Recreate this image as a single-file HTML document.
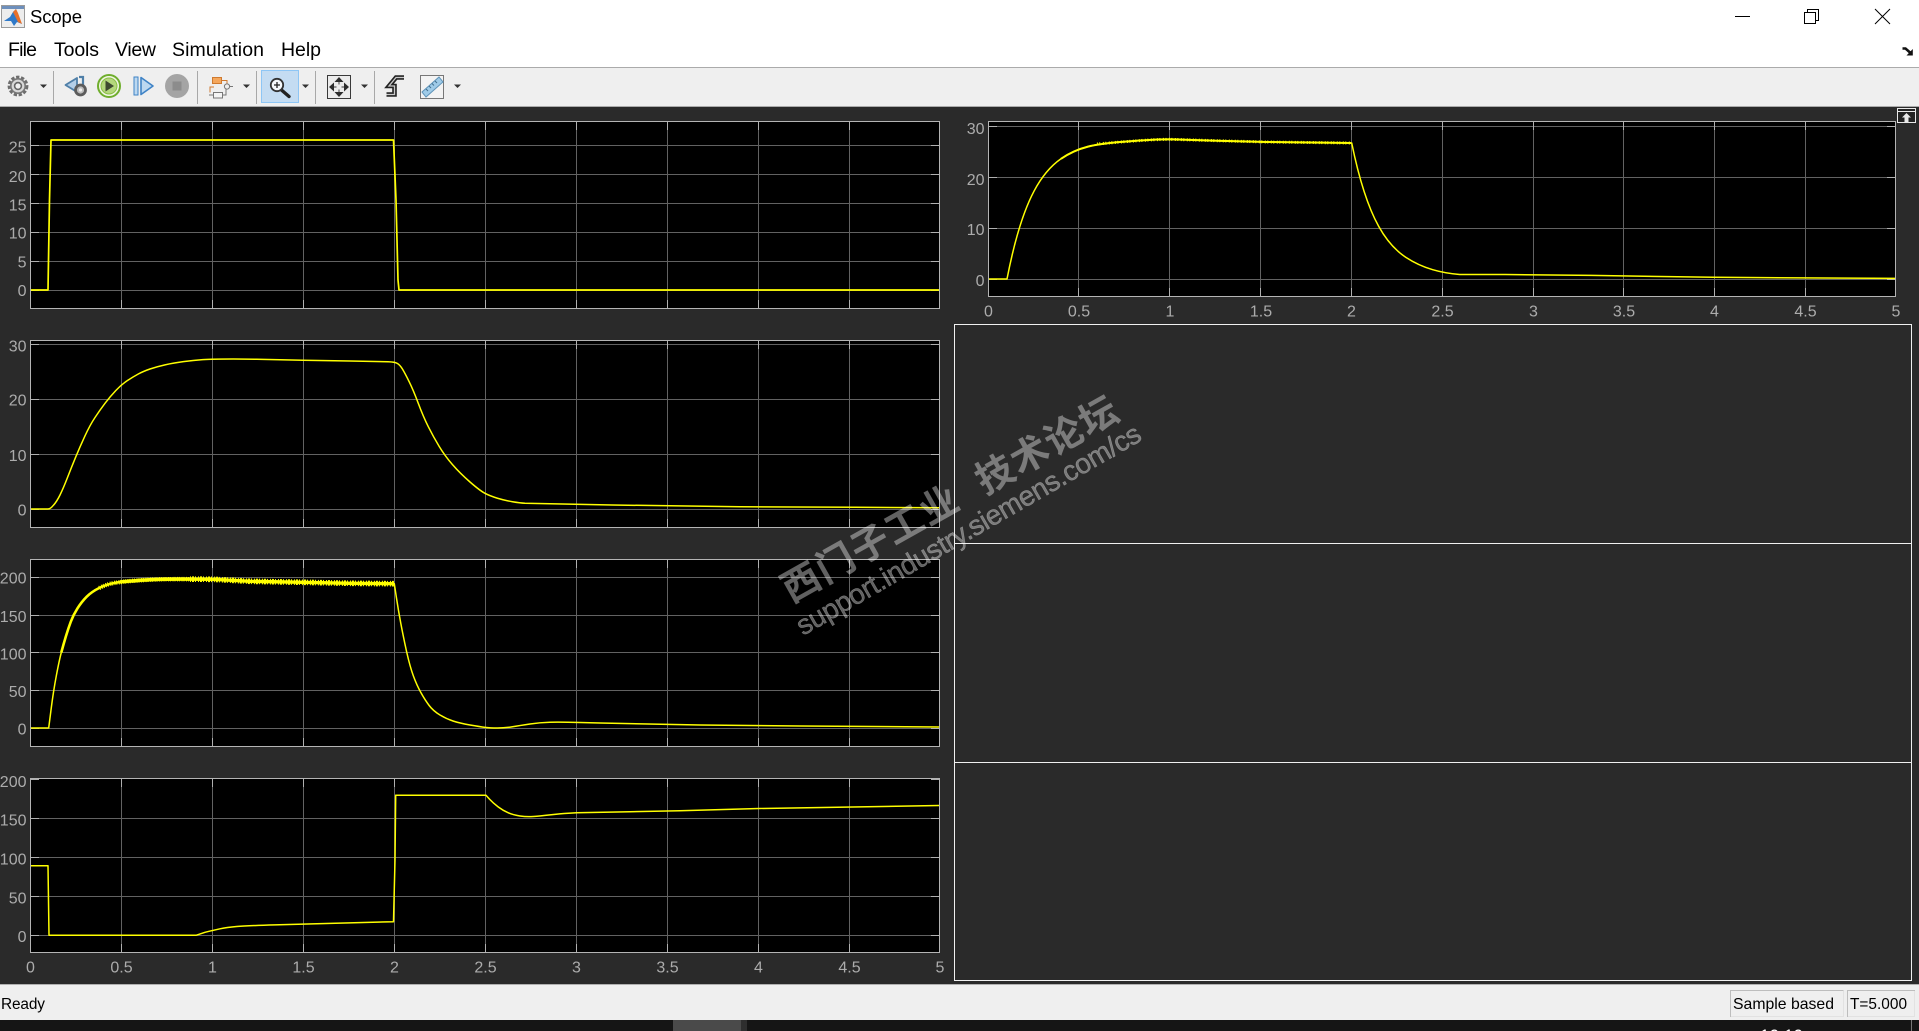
<!DOCTYPE html>
<html lang="en">
<head>
<meta charset="utf-8">
<title>Scope</title>
<style>
html,body{margin:0;padding:0;width:1919px;height:1031px;overflow:hidden;background:#2a2a2a}
svg{display:block;font-family:"Liberation Sans","Noto Sans CJK SC",sans-serif}
.t{fill:#acacac;font-size:16px}
.e{text-anchor:end}
.m{text-anchor:middle}
.ui{fill:#000;font-size:19.5px}
.st{fill:#000;font-size:15.4px}
.grid{stroke:#626262;stroke-width:1;fill:none;shape-rendering:crispEdges}
.tick{stroke:#b0b0b0;stroke-width:1;fill:none;shape-rendering:crispEdges}
.frame{stroke:#b4b4b4;stroke-width:1;fill:#000;shape-rendering:crispEdges}
.c{fill:none;stroke:#ffff00;stroke-width:1.5;stroke-linejoin:round}
.wm{fill:rgba(255,255,255,.38)}
</style>
</head>
<body>
<svg width="1919" height="1031" viewBox="0 0 1919 1031" xmlns="http://www.w3.org/2000/svg">
<!-- chrome backgrounds -->
<rect width="1919" height="67" fill="#fff"/>
<rect y="67" width="1919" height="1" fill="#ababab"/>
<rect y="68" width="1919" height="38" fill="#efefef"/>
<rect y="106" width="1919" height="1.4" fill="#ababab"/>
<rect y="107" width="1919" height="877" fill="#2a2a2a"/>

<!-- title logo -->
<rect x="1.5" y="5.5" width="23" height="22" fill="#ededed" stroke="#9a9a9a"/>
<rect x="2" y="6" width="22" height="3" fill="#6d8fbc"/>
<polygon points="4,21 10,17 13,12 16,9 20,21 22,24 17,22 14,26 11,21" fill="#2f79c8"/>
<polygon points="13,12 16,9 18,13 22,24 18,22 15,16" fill="#e8702a"/>

<text x="30" y="23" class="ui" style="font-size:18.5px" textLength="52">Scope</text>
<text x="8" y="56" class="ui" textLength="29">File</text>
<text x="54" y="56" class="ui" textLength="45">Tools</text>
<text x="115" y="56" class="ui" textLength="41">View</text>
<text x="172" y="56" class="ui" textLength="92">Simulation</text>
<text x="281" y="56" class="ui" textLength="40">Help</text>

<!-- window controls -->
<path d="M1735 16.5H1750" stroke="#000" stroke-width="1" fill="none" shape-rendering="crispEdges"/>
<rect x="1804.5" y="12.5" width="11" height="11" fill="#fff" stroke="#000" shape-rendering="crispEdges"/>
<path d="M1807.5 12.5V9.5H1818.5V20.5H1815.5" stroke="#000" fill="none" shape-rendering="crispEdges"/>
<path d="M1875 9L1890 24M1890 9L1875 24" stroke="#000" stroke-width="1" fill="none"/>
<path d="M1902.500 48.500H1905.500L1910 52.500" stroke="#111" stroke-width="2.600" fill="none"/>
<path d="M1912.800 49V55.500H1906.500Z" fill="#111"/>

<!-- toolbar separators -->
<path d="M53.5 71V104M197.5 71V104M256.5 71V104M315.5 71V104M374.5 71V104" stroke="#a8a8a8" fill="none" shape-rendering="crispEdges"/>
<!-- gear -->
<circle cx="18" cy="86" r="8.6" fill="none" stroke="#6e6e6e" stroke-width="3.6" stroke-dasharray="3.2 1.6"/>
<circle cx="18" cy="86" r="7.2" fill="#d8d8d8" stroke="#777" stroke-width="1.6"/>
<circle cx="18" cy="86" r="3.4" fill="#efefef" stroke="#666" stroke-width="1.6"/>
<!-- dropdown arrows -->
<path d="M40 84.5h7l-3.5 3.5zM243 84.5h7l-3.5 3.5zM302 84.5h7l-3.5 3.5zM361 84.5h7l-3.5 3.5zM454 84.5h7l-3.5 3.5z" fill="#333"/>
<!-- step back -->
<path d="M65.5 85L77 78V92Z" fill="#b4cfe8" stroke="#4f7fa8" stroke-width="1.8" stroke-linejoin="round"/>
<path d="M79 77H83V85" fill="none" stroke="#4f7fa8" stroke-width="2.200"/>
<circle cx="80.5" cy="90" r="5" fill="#bdbdbd" stroke="#5c5c5c" stroke-width="2.800"/>
<circle cx="80.5" cy="90" r="1.6" fill="#efefef"/>
<!-- play -->
<circle cx="109" cy="86" r="11" fill="#f2f6e6" stroke="#6fae2d" stroke-width="2"/>
<circle cx="109" cy="86" r="8" fill="#b4d87c" stroke="#8abf46" stroke-width="1"/>
<path d="M105.5 80.5L105.5 91.5L114 86Z" fill="#3e4a30"/>
<!-- step forward -->
<rect x="134" y="77" width="4" height="18" fill="#bcd8f0" stroke="#3f83c6" stroke-width="1"/>
<path d="M141 77.5L153 86L141 94.5Z" fill="#bcd8f0" stroke="#3f83c6" stroke-width="1.6" stroke-linejoin="round"/>
<!-- stop -->
<circle cx="177" cy="86" r="12" fill="#a4a4a4"/>
<rect x="172.5" y="81.5" width="9" height="9" fill="#8c8c8c"/>
<!-- signal selector -->
<rect x="212.5" y="77.5" width="9" height="6" fill="#f5a75c" stroke="#cf7a30"/>
<path d="M221.5 80.5H227V85M210 92.5V87H214" fill="none" stroke="#cf7a30"/>
<rect x="213.5" y="92.5" width="9" height="5.5" fill="#f4f4f4" stroke="#777"/>
<path d="M222.5 95H226V88.5M209 95H213.500" fill="none" stroke="#777"/>
<circle cx="227" cy="86.500" r="2.600" fill="#efefef" stroke="#777"/>
<path d="M229.600 86.500H233" stroke="#777" fill="none"/>
<!-- zoom button -->
<rect x="261.5" y="70.5" width="37" height="32" fill="#c4dcf2" stroke="#8ec6f5"/>
<path d="M281.500 90L289 96.500" stroke="#222" stroke-width="3.400" stroke-linecap="round" fill="none"/>
<circle cx="277" cy="85" r="6.200" fill="#f5f8fb" stroke="#333" stroke-width="1.800"/>
<path d="M274 85H280M277 82V88" stroke="#222" stroke-width="1.300" fill="none"/>
<!-- autoscale -->
<rect x="327.500" y="75.500" width="23" height="23" fill="#ececec" stroke="#3a3a3a" stroke-width="1.400" shape-rendering="crispEdges"/>
<path d="M339 77l4.500 5h-9zM339 97l4.500-5h-9zM329 87l5-4.500v9zM349 87l-5-4.500v9z" fill="#2c2c2c"/>
<path d="M339 82V84.500M339 89.500V92M334 87H336.500M341.500 87H344" stroke="#777" stroke-width="1.400" fill="none"/>
<!-- trigger -->
<path d="M386.500 94.500H394.500V86H389L396 77.500H404" fill="none" stroke="#232323" stroke-width="4.600"/>
<path d="M386.500 94.500H394.500V86H389L396 77.500H404" fill="none" stroke="#c9c9c9" stroke-width="1.300"/>
<!-- ruler -->
<rect x="420.500" y="75.500" width="23" height="23" fill="#f3f3f3" stroke="#777" shape-rendering="crispEdges"/>
<path d="M422 92L439 77L443 82L426 97Z" fill="#9fcbe8" stroke="#5e93b8"/>
<path d="M428 91l-2-2M431 88l-2-2M434 85.500l-2-2M437 83l-2-2" stroke="#44708f" fill="none"/>

<!-- Plot frames -->
<rect class="frame" x="30.500" y="121.500" width="909" height="187"/>
<rect class="frame" x="30.500" y="340.500" width="909" height="187"/>
<rect class="frame" x="30.500" y="559.500" width="909" height="187"/>
<rect class="frame" x="30.500" y="778.500" width="909" height="174"/>
<rect class="frame" x="988.500" y="121.500" width="907" height="175"/>

<!-- Plot 1 grid -->
<path class="grid" d="M121.500 122V308M212.500 122V308M303.500 122V308M394.500 122V308M485.500 122V308M576.500 122V308M667.500 122V308M758.500 122V308M849.500 122V308M31 145.500H939M31 174.500H939M31 203.500H939M31 232.500H939M31 261.500H939M31 290.500H939"/>
<path class="tick" d="M121.500 122v8M212.500 122v8M303.500 122v8M394.500 122v8M485.500 122v8M576.500 122v8M667.500 122v8M758.500 122v8M849.500 122v8M121.500 300v8M212.500 300v8M303.500 300v8M394.500 300v8M485.500 300v8M576.500 300v8M667.500 300v8M758.500 300v8M849.500 300v8M31 145.500h8M31 174.500h8M31 203.500h8M31 232.500h8M31 261.500h8M31 290.500h8M931 145.500h8M931 174.500h8M931 203.500h8M931 232.500h8M931 261.500h8M931 290.500h8"/>
<!-- Plot 2 grid -->
<path class="grid" d="M121.500 341V527M212.500 341V527M303.500 341V527M394.500 341V527M485.500 341V527M576.500 341V527M667.500 341V527M758.500 341V527M849.500 341V527M31 344.500H939M31 399.500H939M31 454.500H939M31 509.500H939"/>
<path class="tick" d="M121.500 341v8M212.500 341v8M303.500 341v8M394.500 341v8M485.500 341v8M576.500 341v8M667.500 341v8M758.500 341v8M849.500 341v8M121.500 519v8M212.500 519v8M303.500 519v8M394.500 519v8M485.500 519v8M576.500 519v8M667.500 519v8M758.500 519v8M849.500 519v8M31 344.500h8M31 399.500h8M31 454.500h8M31 509.500h8M931 344.500h8M931 399.500h8M931 454.500h8M931 509.500h8"/>
<!-- Plot 3 grid -->
<path class="grid" d="M121.500 560V746M212.500 560V746M303.500 560V746M394.500 560V746M485.500 560V746M576.500 560V746M667.500 560V746M758.500 560V746M849.500 560V746M31 577.500H939M31 615.500H939M31 652.500H939M31 690.500H939M31 728.500H939"/>
<path class="tick" d="M121.500 560v8M212.500 560v8M303.500 560v8M394.500 560v8M485.500 560v8M576.500 560v8M667.500 560v8M758.500 560v8M849.500 560v8M121.500 738v8M212.500 738v8M303.500 738v8M394.500 738v8M485.500 738v8M576.500 738v8M667.500 738v8M758.500 738v8M849.500 738v8M31 577.500h8M31 615.500h8M31 652.500h8M31 690.500h8M31 728.500h8M931 577.500h8M931 615.500h8M931 652.500h8M931 690.500h8M931 728.500h8"/>
<!-- Plot 4 grid -->
<path class="grid" d="M121.500 779V952M212.500 779V952M303.500 779V952M394.500 779V952M485.500 779V952M576.500 779V952M667.500 779V952M758.500 779V952M849.500 779V952M31 818.500H939M31 857.500H939M31 896.500H939M31 935.500H939"/>
<path class="tick" d="M121.500 779v8M212.500 779v8M303.500 779v8M394.500 779v8M485.500 779v8M576.500 779v8M667.500 779v8M758.500 779v8M849.500 779v8M121.500 944v8M212.500 944v8M303.500 944v8M394.500 944v8M485.500 944v8M576.500 944v8M667.500 944v8M758.500 944v8M849.500 944v8M31 779.500h8M31 818.500h8M31 857.500h8M31 896.500h8M31 935.500h8M931 779.500h8M931 818.500h8M931 857.500h8M931 896.500h8M931 935.500h8"/>
<!-- Right plot grid -->
<path class="grid" d="M1078.500 122V296M1169.500 122V296M1260.500 122V296M1351.500 122V296M1442.500 122V296M1533.500 122V296M1623.500 122V296M1714.500 122V296M1805.500 122V296M989 126.500H1895M989 177.500H1895M989 228.500H1895M989 279.500H1895"/>
<path class="tick" d="M1078.500 122v8M1169.500 122v8M1260.500 122v8M1351.500 122v8M1442.500 122v8M1533.500 122v8M1623.500 122v8M1714.500 122v8M1805.500 122v8M1078.500 288v8M1169.500 288v8M1260.500 288v8M1351.500 288v8M1442.500 288v8M1533.500 288v8M1623.500 288v8M1714.500 288v8M1805.500 288v8M989 126.500h8M989 177.500h8M989 228.500h8M989 279.500h8M1887 126.500h8M1887 177.500h8M1887 228.500h8M1887 279.500h8"/>

<!-- Curves -->
<polyline class="c" style="stroke-width:1.700" points="31,290 48,290 49.500,200 51,140 393.500,140 396,200 398,280 399,290 939,290"/>

<path class="c" d="M31 509L48 509Q50.500 509 53.350 505.350Q56.700 501.700 60 495Q63.300 488.300 67.500 477.500Q71.700 466.700 75.850 456.700Q80 446.700 85 435.850Q90 425 95 417.500Q100 410 105 403.350Q110 396.700 115.850 390.500Q121.700 384.300 127.500 380.500Q133.300 376.700 138.300 374Q143.300 371.300 150 369Q156.700 366.700 165 364.850Q173.300 363 183.300 361.650Q193.300 360.300 202.800 359.650Q212.300 359 233.300 359L256.700 359.300L303.300 360.300L350 361L388 361.800Q395 362 397.500 363.500Q400 365 402.500 369.150Q405 373.300 409.150 381.650Q413.300 390 418.300 403.350Q423.300 416.700 428.300 426.700Q433.300 436.700 439.150 446.350Q445 456 452.500 464.650Q460 473.300 470 482Q480 490.700 485 493.350Q490 496 497.500 498.250Q505 500.500 512.500 501.750Q520 503 525 503.250L612 505L740 506.700L855 507.300L939 507.700"/>

<path class="c" d="M31 728L48.700 728L51 710Q53.300 691.700 56.300 675.850Q59.300 660 61.300 652.500Q63.300 645 65.800 636.650Q68.300 628.300 70.800 621.650Q73.300 615 77.500 608.350Q81.700 601.700 86.700 596.700Q91.700 591.700 99.200 588Q106.700 584.300 114.200 583Q121.700 581.700 132.500 580.850Q143.300 580 155 579.500Q166.700 579 190 579.150L213.300 579.300L250 581.300L303.300 582.300L350 583.300L394.300 583.700L396.300 596.850Q398.300 610 400.800 623.350Q403.300 636.700 406.650 651.850Q410 666.700 413.350 675.850Q416.700 685 420.850 692.500Q425 700 429.150 705.500Q433.300 711 440 715Q446.700 719 453.350 721.150Q460 723.300 470 725Q480 726.700 485 727.350Q490 728 497.500 728Q505 728 512.500 726.750Q520 725.500 530 724Q540 722.500 550 722.250Q560 722 580 722.500L600 723L700 725L800 726L939 727"/>
<!-- plot 3 noise band -->
<path fill="none" stroke="#ffff00" stroke-width="2.600" d="M61.300 652.500Q63.300 645 65.800 636.650Q68.300 628.300 70.800 621.650Q73.300 615 77.500 608.350Q81.700 601.700 86.700 596.700Q91.700 591.700 99.200 588Q106.700 584.300 114.200 583Q121.700 581.700 132.500 580.850Q143.300 580 155 579.500Q166.700 579 190 579.150L213.300 579.300L250 581.300L303.300 582.300L350 583.300L394 583.700"/>
<path fill="none" stroke="#ffff00" stroke-width="3.400" d="M120 581.900Q143.300 580 155 579.500Q166.700 579 190 579.150L213.300 579.300L250 581.300L303.300 582.300L350 583.300L394 583.700"/>
<path fill="none" stroke="#ffff00" stroke-width="5.600" stroke-dasharray="1 1 2 1 1 2" d="M190 579.150L213.300 579.300L250 581.300L303.300 582.300L350 583.300L394 583.700"/>
<path fill="none" stroke="#ffff00" stroke-width="4.400" stroke-dasharray="1 1.500 1 1" d="M99.200 588Q106.700 584.300 114.200 583Q121.700 581.700 132.500 580.850Q143.300 580 155 579.500Q166.700 579 190 579.150"/>

<path class="c" d="M31 865.700L48 865.700L49 935.300L196 935.300L205 932.300L209 931.300Q213.300 930.300 220 928.800Q226.700 927.300 236.700 926.500Q246.700 925.700 275 924.850L393.500 921.700L395 860L395.700 795.300L486 795.300L489.600 799.300Q493.300 803.300 498.300 807Q503.300 810.700 508.300 812.850Q513.300 815 520 816Q526.700 817 533.350 816.500Q540 816 550 814.850Q560 813.700 568.350 813.200L576.700 812.700L630 811.700L680 810.700L759 808.500L939 805.500"/>

<path class="c" d="M989 279L1007 279C1016 232.700 1025 208.200 1034 191.200C1043 174.200 1052 165.100 1061 158.800C1079 146.300 1097 144.200 1115 142.500C1130 141.200 1150 139.300 1170 139.300L1216.700 140.700L1266.700 142L1351.700 143C1360.700 187 1369.700 210.200 1378.700 226.400C1387.700 242.600 1396.700 251.300 1405.700 257.200C1423.700 269 1441.700 272.900 1459.700 274.500L1505 274.500L1591 275.400L1713 277.300L1895 278.400"/>
<!-- right plot noise band -->
<path fill="none" stroke="#ffff00" stroke-width="2" d="M1061 158.800C1079 146.300 1097 144.200 1115 142.500C1130 141.200 1150 139.300 1170 139.300L1216.700 140.700L1266.700 142L1351 143"/>
<path fill="none" stroke="#ffff00" stroke-width="3" stroke-dasharray="1 1.500 1 2.500" d="M1097 144C1115 142.500 1150 139.300 1170 139.300L1216.700 140.700L1266.700 142L1351 143"/>

<!-- Left labels -->
<g transform="translate(-0.500 -0.700)">
<text x="27" y="153.300" class="t e">25</text>
<text x="27" y="182.700" class="t e">20</text>
<text x="27" y="211" class="t e">15</text>
<text x="27" y="239.300" class="t e">10</text>
<text x="27" y="268.300" class="t e">5</text>
<text x="27" y="296.700" class="t e">0</text>
<text x="27" y="352" class="t e">30</text>
<text x="27" y="406" class="t e">20</text>
<text x="27" y="461.700" class="t e">10</text>
<text x="27" y="516" class="t e">0</text>
<text x="27" y="584.300" class="t e">200</text>
<text x="27" y="622.700" class="t e">150</text>
<text x="27" y="660.300" class="t e">100</text>
<text x="27" y="697.700" class="t e">50</text>
<text x="27" y="735.300" class="t e">0</text>
<text x="27" y="787.700" class="t e">200</text>
<text x="27" y="826" class="t e">150</text>
<text x="27" y="865" class="t e">100</text>
<text x="27" y="904.300" class="t e">50</text>
<text x="27" y="942.700" class="t e">0</text>
</g>
<text x="30.500" y="972.700" class="t m">0</text>
<text x="121.500" y="972.700" class="t m">0.5</text>
<text x="212.500" y="972.700" class="t m">1</text>
<text x="303.500" y="972.700" class="t m">1.5</text>
<text x="394.500" y="972.700" class="t m">2</text>
<text x="485.500" y="972.700" class="t m">2.5</text>
<text x="576.500" y="972.700" class="t m">3</text>
<text x="667.500" y="972.700" class="t m">3.5</text>
<text x="758.500" y="972.700" class="t m">4</text>
<text x="849.500" y="972.700" class="t m">4.5</text>
<text x="940" y="972.700" class="t m">5</text>
<!-- Right labels -->
<text x="984.500" y="134" class="t e">30</text>
<text x="984.500" y="185" class="t e">20</text>
<text x="984.500" y="235" class="t e">10</text>
<text x="984.500" y="286" class="t e">0</text>
<text x="988.500" y="316.700" class="t m">0</text>
<text x="1079" y="316.700" class="t m">0.5</text>
<text x="1170" y="316.700" class="t m">1</text>
<text x="1261" y="316.700" class="t m">1.5</text>
<text x="1351.500" y="316.700" class="t m">2</text>
<text x="1442.500" y="316.700" class="t m">2.5</text>
<text x="1533.500" y="316.700" class="t m">3</text>
<text x="1624" y="316.700" class="t m">3.5</text>
<text x="1714.500" y="316.700" class="t m">4</text>
<text x="1805.500" y="316.700" class="t m">4.5</text>
<text x="1896" y="316.700" class="t m">5</text>

<!-- Expand icon -->
<rect x="1897.500" y="108.500" width="18" height="14" fill="#222" stroke="#e8e8e8" shape-rendering="crispEdges"/>
<path d="M1898 111.500H1915" stroke="#e8e8e8" fill="none" shape-rendering="crispEdges"/>
<path d="M1906.500 113L1911 117.500H1908.500V122H1904.500V117.500H1902Z" fill="#e8e8e8"/>

<!-- Empty axes panels -->
<path d="M954.500 324.500H1911.500V980.500H954.500ZM955 543.500H1911M955 762.500H1911" fill="none" stroke="#f0f0f0" stroke-width="1" shape-rendering="crispEdges"/>

<!-- Watermark -->
<g class="wm">
<text transform="translate(791 603.500) rotate(-29.300)" font-size="38" font-weight="700" letter-spacing="1.500" style="font-family:'Noto Sans CJK SC',sans-serif">西门子工业</text>
<text transform="translate(985 495) rotate(-29.300)" font-size="38" font-weight="700" letter-spacing="1.500" style="font-family:'Noto Sans CJK SC',sans-serif">技术论坛</text>
<text transform="translate(803 636) rotate(-30)" font-size="28" stroke="rgba(255,255,255,.3)" stroke-width=".5" textLength="393">support.industry.siemens.com/cs</text>
</g>

<!-- Status bar -->
<rect y="985" width="1919" height="35" fill="#efefef"/>
<rect y="984" width="1919" height="1" fill="#b0b0b0"/>
<text x="1" y="1009" class="st" textLength="44">Ready</text>
<path d="M1730.500 1017V990.500H1843.500M1847.500 1017V990.500H1915" fill="none" stroke="#bdbdbd" shape-rendering="crispEdges"/>
<path d="M1843.500 991V1016.500H1731M1914.500 991V1016.500H1848" fill="none" stroke="#e2e2e2" shape-rendering="crispEdges"/>
<text x="1733" y="1009" class="st" style="font-size:15.800px" textLength="101">Sample based</text>
<text x="1850" y="1009" class="st" textLength="57">T=5.000</text>

<!-- Taskbar fragment -->
<rect y="1020" width="1919" height="11" fill="#151515"/>
<rect x="673" y="1020" width="68" height="11" fill="#4a4a4a"/>
<rect x="741" y="1020" width="6" height="11" fill="#2e2e2e"/>
<rect x="1911" y="1020" width="1" height="11" fill="#777"/>
<text x="1760" y="1041" fill="#fff" font-size="17" textLength="43">10:10</text>
</svg>
</body>
</html>
